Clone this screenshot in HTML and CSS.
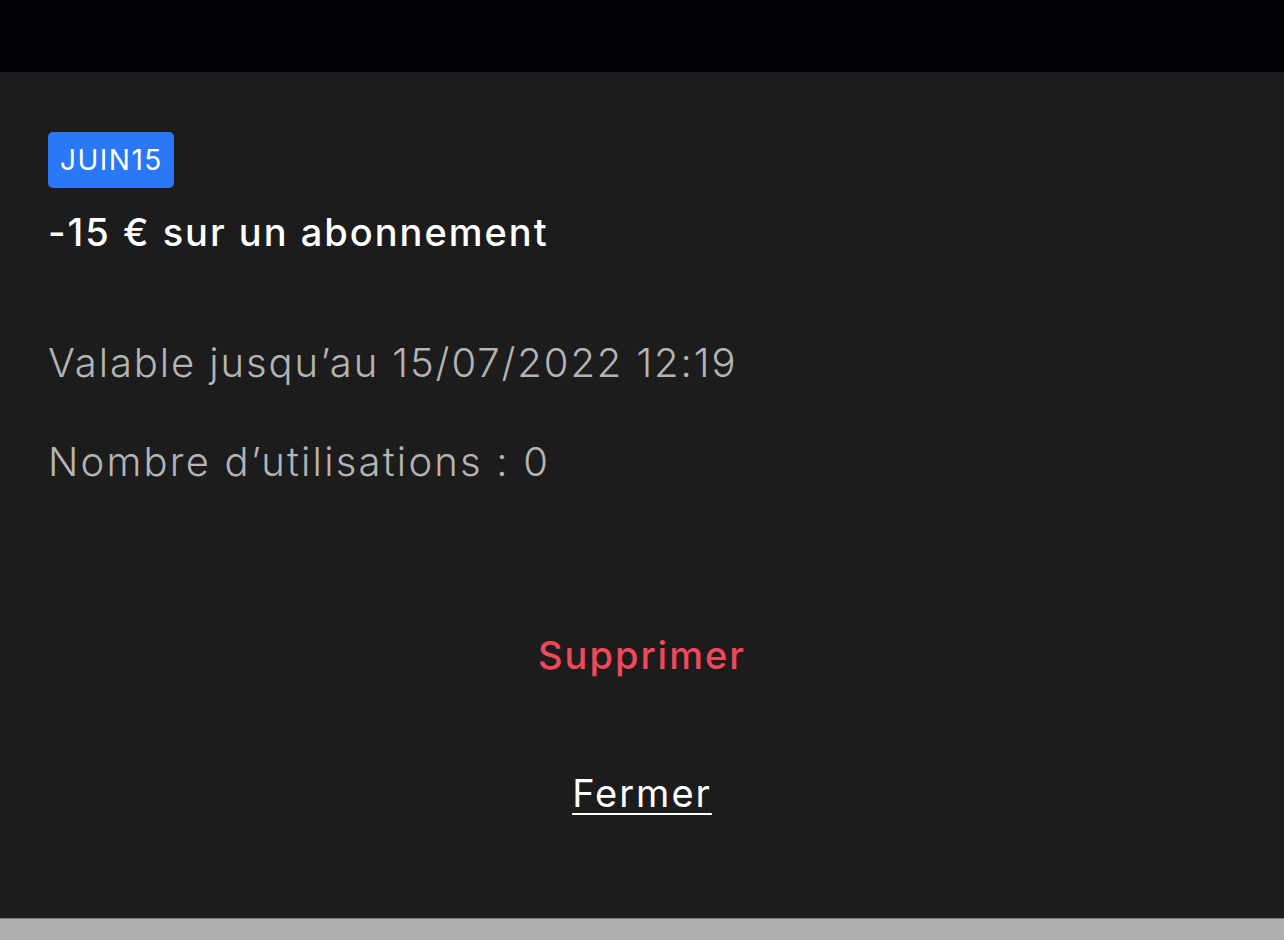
FILE: index.html
```html
<!DOCTYPE html>
<html lang="fr">
<head>
  <meta charset="UTF-8">
  <title>Code promo JUIN15</title>
  <link rel="stylesheet" href="styles.css">
</head>
<body>

<div class="topbar"></div>

<div class="promo-sheet">
  <span class="promo-code">JUIN15</span>
  <h2 class="promo-title">-15 € sur un abonnement</h2>

  <p class="promo-meta promo-validity">Valable jusqu’au 15/07/2022 12:19</p>
  <p class="promo-meta promo-uses">Nombre d’utilisations : 0</p>

  <div class="promo-actions">
    <button class="delete-btn">Supprimer</button>
    <button class="close-btn">Fermer</button>
  </div>
</div>

<div class="bottom-strip"></div>

</body>
</html>
```

FILE: styles.css
```css
    body {
      font-family: Inter, 'Open Sans', sans-serif;
      background: #1c1c1c;
      margin: 0;
      padding: 0;
      height: 940px;
      overflow: hidden;
      display: flex;
      flex-direction: column;
    }

    .topbar {
      height: 72px;
      background: #020308;
      flex-shrink: 0;
    }

    .promo-sheet {
      height: 846px;
      box-sizing: border-box;
      padding: 60px 48px 0;
      background: #1c1c1c;
      display: flex;
      flex-direction: column;
      align-items: flex-start;
      flex-shrink: 0;
    }

    .promo-code {
      display: inline-block;
      height: 56px;
      line-height: 56px;
      padding: 0 11px 0 12px;
      background: #2a78f7;
      color: #fff;
      font-size: 28px;
      font-weight: 400;
      letter-spacing: 1.5px;
      border-radius: 5px;
    }

    .promo-title {
      margin: 22px 0 0;
      color: #fff;
      font-size: 38px;
      line-height: 44px;
      font-weight: 500;
      letter-spacing: 2px;
    }

    .promo-meta {
      margin: 0;
      color: #b4b4b4;
      font-size: 40px;
      line-height: 50px;
      font-weight: 300;
      letter-spacing: 1.9px;
    }

    .promo-validity {
      margin-top: 84px;
    }

    .promo-uses {
      margin-top: 49px;
      letter-spacing: 2.2px;
    }

    .promo-actions {
      align-self: stretch;
      display: flex;
      flex-direction: column;
      align-items: center;
    }

    .promo-actions button {
      background: none;
      border: none;
      padding: 0;
      font-family: inherit;
      font-size: 38px;
      line-height: 44px;
      letter-spacing: 2px;
      cursor: pointer;
    }

    .delete-btn {
      margin-top: 146px;
      color: #f2485c;
      font-weight: 500;
    }

    .close-btn {
      margin-top: 94px;
      color: #fff;
      font-weight: 400;
      text-decoration: underline;
      text-underline-offset: 6px;
      text-decoration-thickness: 2px;
    }

    .bottom-strip {
      height: 21px;
      background: #b0b0b0;
      border-top: 1px solid #7a7a7a;
      flex-shrink: 0;
    }
```
